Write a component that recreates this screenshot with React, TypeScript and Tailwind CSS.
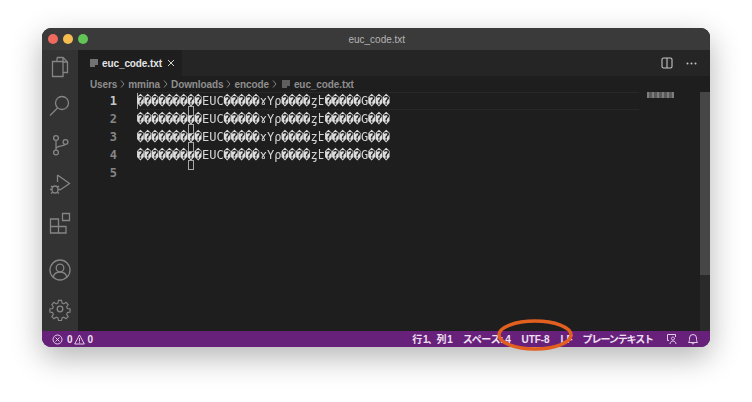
import React from "react";

const Icon = ({ children, size = 24, className = "" }: { children: React.ReactNode; size?: number; className?: string }) => (
  <svg width={size} height={size} viewBox="0 0 24 24" fill="none" stroke="currentColor" strokeWidth={1.3} className={className}>
    {children}
  </svg>
);

const LINE = "���������EUC�����ɤYρ����ȥէ�����G���";

function CodeLine() {
  const parts = LINE.split(/(�+)/).filter(Boolean);
  return (
    <div className="relative">
      {parts.map((p, i) => (
        <span key={i} className={p[0] === "�" ? "font-bold text-[#dcdcdc]" : ""}>
          {p}
        </span>
      ))}
    </div>
  );
}

function Chev() {
  return (
    <svg width="5" height="8" viewBox="0 0 5 8" fill="none" stroke="#8e8e8e" strokeWidth="0.900">
      <path d="M1 0.500l3 3.500-3 3.500" />
    </svg>
  );
}

export default function App() {
  return (
    <div className="relative w-[752px] h-[402px] bg-white overflow-hidden pt-[28px] pl-[42px] font-['Liberation_Sans','Noto_Sans_CJK_JP',sans-serif]">
      <div className="w-[668px] h-[319px] rounded-[9px] overflow-hidden flex flex-col bg-[#1e1e1e] shadow-[0_10px_30px_rgba(0,0,0,0.3)]">
        {/* title bar */}
        <div className="h-[22px] shrink-0 bg-[#3a3a3a] flex items-center relative">
          <div className="flex items-center gap-[5.5px] pl-[6px]">
            <span className="w-[9.500px] h-[9.500px] rounded-full bg-[#ee6a5e]" />
            <span className="w-[9.500px] h-[9.500px] rounded-full bg-[#f5bd4f]" />
            <span className="w-[9.500px] h-[9.500px] rounded-full bg-[#61c454]" />
          </div>
          <div className="flex-1 text-center text-[10px] text-[#b4b4b4] pr-[44px]">euc_code.txt</div>
        </div>
        <div className="flex-1 flex min-h-0">
          {/* activity bar */}
          <div className="w-[36px] shrink-0 bg-[#333333] flex flex-col items-center text-[#858585] pt-[5px] pb-[10px]">
            <Icon size={24}>
              <path d="M9 2.500h6l4.500 4.500v10.500h-4.500M9 2.500v4M15 2.500v4.500h4.500" />
              <path d="M4.500 6.500h10.500v15H4.500z" />
            </Icon>
            <Icon size={24} className="mt-[15px]">
              <circle cx="14" cy="9" r="6.500" />
              <path d="M9.500 14l-7.500 7.500" />
            </Icon>
            <Icon size={24} className="mt-[15px]">
              <circle cx="8" cy="5" r="2.400" />
              <circle cx="8" cy="19.500" r="2.400" />
              <circle cx="17.500" cy="9" r="2.400" />
              <path d="M8 7.400v9.700M8 15.500c1-3.500 8-2 9.500-4.100" />
            </Icon>
            <Icon size={24} className="mt-[15px]">
              <path d="M9.500 3l12 8.500-9.500 6.500M9.500 3v7" />
              <ellipse cx="7" cy="17.500" rx="3" ry="3.500" />
              <path d="M3 14l2 1.500M11 14l-2 1.500M2 17.500h2M10 17.500h2M3 21.500l2-1.500M11 21.500l-2-1.500" />
            </Icon>
            <Icon size={24} className="mt-[15px]">
              <path d="M2.500 8h8v7.500h7.500v6.500H2.500z" />
              <path d="M2.500 15.500h8V22" />
              <path d="M14.500 2.500h7v7h-7z" />
            </Icon>
            <div className="flex-1" />
            <Icon size={24}>
              <circle cx="12" cy="12" r="10" />
              <circle cx="12" cy="10" r="3.800" />
              <path d="M5 19.500c1-4.500 4-5.500 7-5.500s6 1 7 5.500" />
            </Icon>
            <Icon size={24} className="mt-[15px]">
              <circle cx="12" cy="12" r="2.800" />
              <path d="M10.300 2.500h3.400l.6 3 1.900.8 2.500-1.700 2.400 2.400-1.700 2.500.8 1.900 3 .6v3.400l-3 .6-.8 1.900 1.700 2.500-2.400 2.400-2.500-1.700-1.900.8-.6 3h-3.400l-.6-3-1.900-.8-2.500 1.700-2.400-2.400 1.700-2.500-.8-1.900-3-.6v-3.400l3-.6.8-1.900-1.700-2.500 2.400-2.400 2.500 1.700 1.900-.8z" transform="translate(1.200 1.200) scale(0.9)" />
            </Icon>
          </div>
          {/* editor */}
          <div className="flex-1 flex flex-col min-w-0">
            <div className="h-[26px] shrink-0 bg-[#252526] flex items-stretch">
              <div className="w-[104px] bg-[#1e1e1e] flex items-center pl-[12px] text-[#e4e4e4] text-[10px] font-bold">
                <svg width="9" height="8" viewBox="0 0 9 8" stroke="#c5c5c5" strokeWidth="1" className="mr-[3px]">
                  <path d="M0 1h8M0 3h8M0 5h8M0 7h5" />
                </svg>
                <span className="tracking-[-0.1px]">euc_code.txt</span>
                <svg width="8" height="8" viewBox="0 0 8 8" stroke="#d0d0d0" strokeWidth="1" className="ml-[5px]">
                  <path d="M1 1l6 6M7 1l-6 6" />
                </svg>
              </div>
              <div className="flex-1 flex items-center justify-end gap-[13px] pr-[13px] text-[#c5c5c5]">
                <svg width="12" height="12" viewBox="0 0 12 12" fill="none" stroke="currentColor" strokeWidth="1.100">
                  <rect x="1" y="1" width="10" height="10" rx="1.500" />
                  <path d="M6 1v10" />
                </svg>
                <svg width="11" height="3" viewBox="0 0 11 3" fill="currentColor">
                  <circle cx="1.500" cy="1.500" r="1" />
                  <circle cx="5.500" cy="1.500" r="1" />
                  <circle cx="9.500" cy="1.500" r="1" />
                </svg>
              </div>
            </div>
            <div className="h-[16px] shrink-0 flex items-center pl-[12px] text-[10px] font-bold tracking-[-0.1px] text-[#8e8e8e] gap-[3px]">
              <span>Users</span><Chev /><span>mmina</span><Chev /><span>Downloads</span><Chev /><span>encode</span><Chev />
              <svg width="9" height="8" viewBox="0 0 9 8" stroke="#a0a0a0" strokeWidth="1" className="ml-[2px]">
                <path d="M0 1h8M0 3h8M0 5h8M0 7h5" />
              </svg>
              <span>euc_code.txt</span>
            </div>
            <div className="flex-1 relative flex min-h-0">
              <div className="w-[40px] shrink-0 text-right pr-[1px] font-['DejaVu_Sans_Mono',monospace] text-[12px] font-bold leading-[18px] text-[#858585]">
                <div className="text-[#c6c6c6]">1</div>
                <div>2</div>
                <div>3</div>
                <div>4</div>
                <div>5</div>
              </div>
              <div className="ml-[19px] flex-1 relative font-['DejaVu_Sans_Mono','Liberation_Mono',monospace] text-[12px] leading-[18px] text-[#d4d4d4] whitespace-nowrap">
                <div className="absolute left-0 top-0 w-[502px] h-[18px] border-y border-[#282828]" />
                <div className="absolute left-0 top-[1px] w-[1px] h-[16px] bg-[#aeafad]" />
                <div className="blur-[0.4px]">
                  <CodeLine />
                  <CodeLine />
                  <CodeLine />
                  <CodeLine />
                </div>
                {[14, 32, 50, 68].map((t) => (
                  <div key={t} className="absolute left-[51px] w-[6px] h-[10px] border border-[#a8a8a8] bg-[#1e1e1e]" style={{ top: t }} />
                ))}
              </div>
              {/* minimap */}
              <div className="absolute left-[569px] top-0 w-[27px] h-[6px] bg-[#5a5a5a] [background-image:repeating-linear-gradient(90deg,#7d7d7d_0,#7d7d7d_2px,#5a5a5a_2px,#5a5a5a_5px)]" />
              <div className="absolute right-0 top-0 bottom-0 w-[10px] bg-[#2a2a2a]">
                <div className="h-[183px] bg-[#464646]" />
              </div>
            </div>
          </div>
        </div>
        {/* status bar */}
        <div className="h-[16px] shrink-0 bg-[#68217a] flex items-center text-[10px] font-bold text-[#eee0f2] pl-[10px] pr-[11px]">
          <svg width="11" height="11" viewBox="0 0 11 11" fill="none" stroke="currentColor" strokeWidth="0.900">
            <circle cx="5.500" cy="5.500" r="4.500" />
            <path d="M3.500 3.500l4 4M7.500 3.500l-4 4" />
          </svg>
          <span className="ml-[4px]">0</span>
          <svg width="11" height="11" viewBox="0 0 11 11" fill="none" stroke="currentColor" strokeWidth="0.900" className="ml-[1px]">
            <path d="M5.500 1l4.800 9H.7z" />
            <path d="M5.500 4v3.500M5.500 8.200v1" />
          </svg>
          <span className="ml-[3px]">0</span>
          <div className="flex-1" />
          <span className="tracking-[-1px]">行 1、列 1</span>
          <span className="ml-[11px] tracking-[-0.4px]">スペース: 4</span>
          <span className="ml-[11px] tracking-[-0.1px]">UTF-8</span>
          <span className="ml-[11px]">LF</span>
          <span className="ml-[10px] tracking-[-1.1px]">プレーンテキスト</span>
          <svg width="12" height="12" viewBox="0 0 12 12" fill="none" stroke="currentColor" strokeWidth="0.900" className="ml-[13px]">
            <path d="M9.500 4V1.500h-8v6H3M7 7a1.500 1.500 0 1 0-.01 0M4 11c.3-2 1.500-3 3-3s2.700 1 3 3" />
          </svg>
          <svg width="12" height="12" viewBox="0 0 12 12" fill="none" stroke="currentColor" strokeWidth="0.900" className="ml-[9px]">
            <path d="M1.500 9.500c1-1 1-2.500 1-4.500a3.500 3.500 0 0 1 7 0c0 2 0 3.500 1 4.500zM5 10a1 1 0 0 0 2 0" />
          </svg>
        </div>
      </div>
      {/* annotation */}
      <svg width="84" height="36" viewBox="0 0 84 36" fill="none" className="absolute left-[493px] top-[317px]">
        <ellipse cx="42" cy="18" rx="36" ry="14" stroke="#e2601f" strokeWidth="3.500" />
      </svg>
    </div>
  );
}
